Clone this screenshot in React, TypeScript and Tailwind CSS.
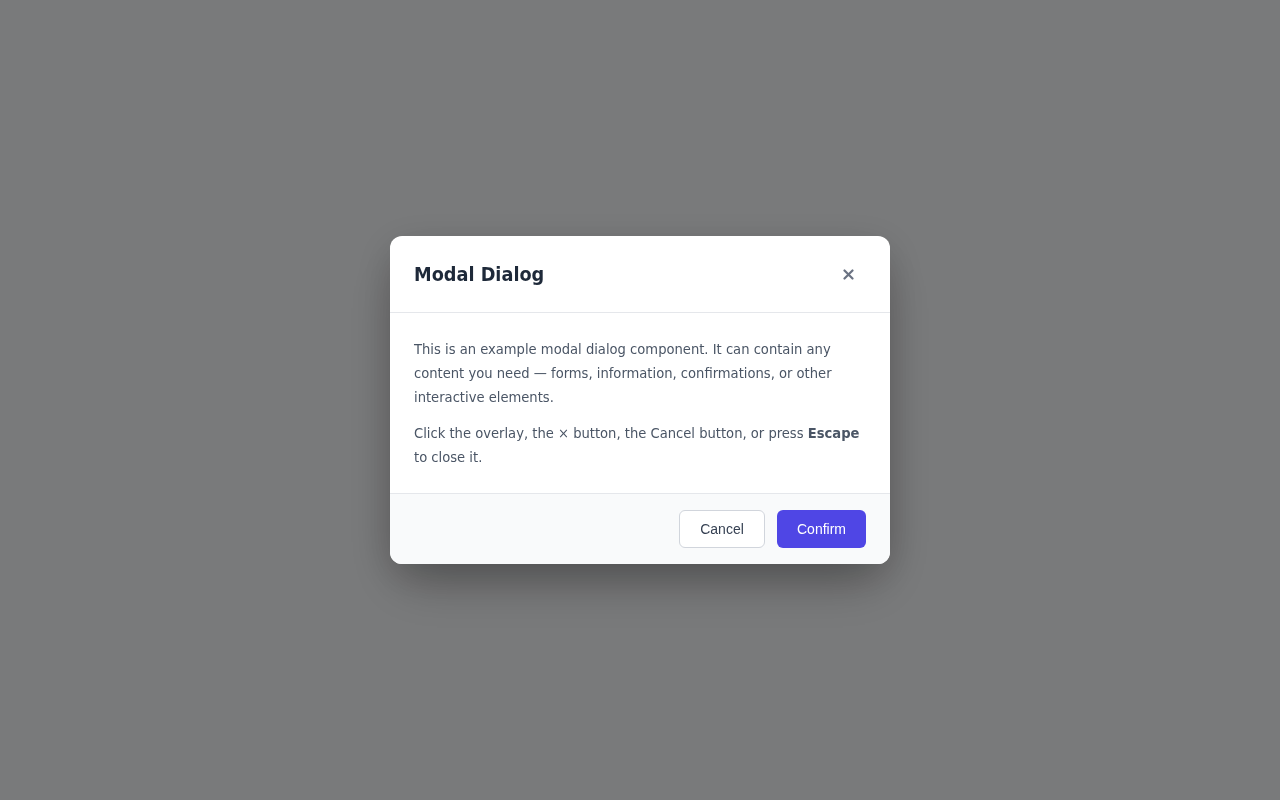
export default function App() {
  return (
    <div className="min-h-screen w-full bg-gray-100 relative" style={{ fontFamily: "Tahoma, 'DejaVu Sans Condensed', 'DejaVu Sans', sans-serif" }}>
      <div className="fixed inset-0 bg-black/50 flex items-center justify-center">
        <div className="w-[500px] bg-white rounded-xl shadow-[0_25px_50px_-12px_rgba(0,0,0,0.3),0_10px_40px_rgba(0,0,0,0.15)] overflow-hidden">
          <div className="flex items-center justify-between px-6 h-[77px] border-b border-gray-200">
            <h2 className="text-[19.7px] font-bold text-gray-800 pt-px">Modal Dialog</h2>
            <button className="w-9 h-9 flex items-center justify-center text-gray-500">
              <svg width="11" height="11" viewBox="0 0 11 11" fill="none" stroke="currentColor" strokeWidth="2.2" strokeLinecap="round">
                <path d="M1.5 1.5l8 8M9.5 1.5l-8 8" />
              </svg>
            </button>
          </div>
          <div className="px-6 py-6 text-[14.6px] leading-6 text-gray-600">
            <p>
              This is an example modal dialog component. It can contain any content you need — forms, information,
              confirmations, or other interactive elements.
            </p>
            <p className="mt-3">
              Click the overlay, the × button, the Cancel button, or press <strong className="font-bold">Escape</strong> to
              close it.
            </p>
          </div>
          <div className="flex justify-end gap-3 px-6 py-4 bg-gray-50 border-t border-gray-200" style={{ fontFamily: "'Liberation Sans', Arial, sans-serif" }}>
            <button className="h-[38px] w-[86px] rounded-md border border-gray-300 bg-white text-sm text-gray-700">Cancel</button>
            <button className="h-[38px] w-[89px] rounded-md bg-[#4f46e5] text-sm text-white">Confirm</button>
          </div>
        </div>
      </div>
    </div>
  );
}
